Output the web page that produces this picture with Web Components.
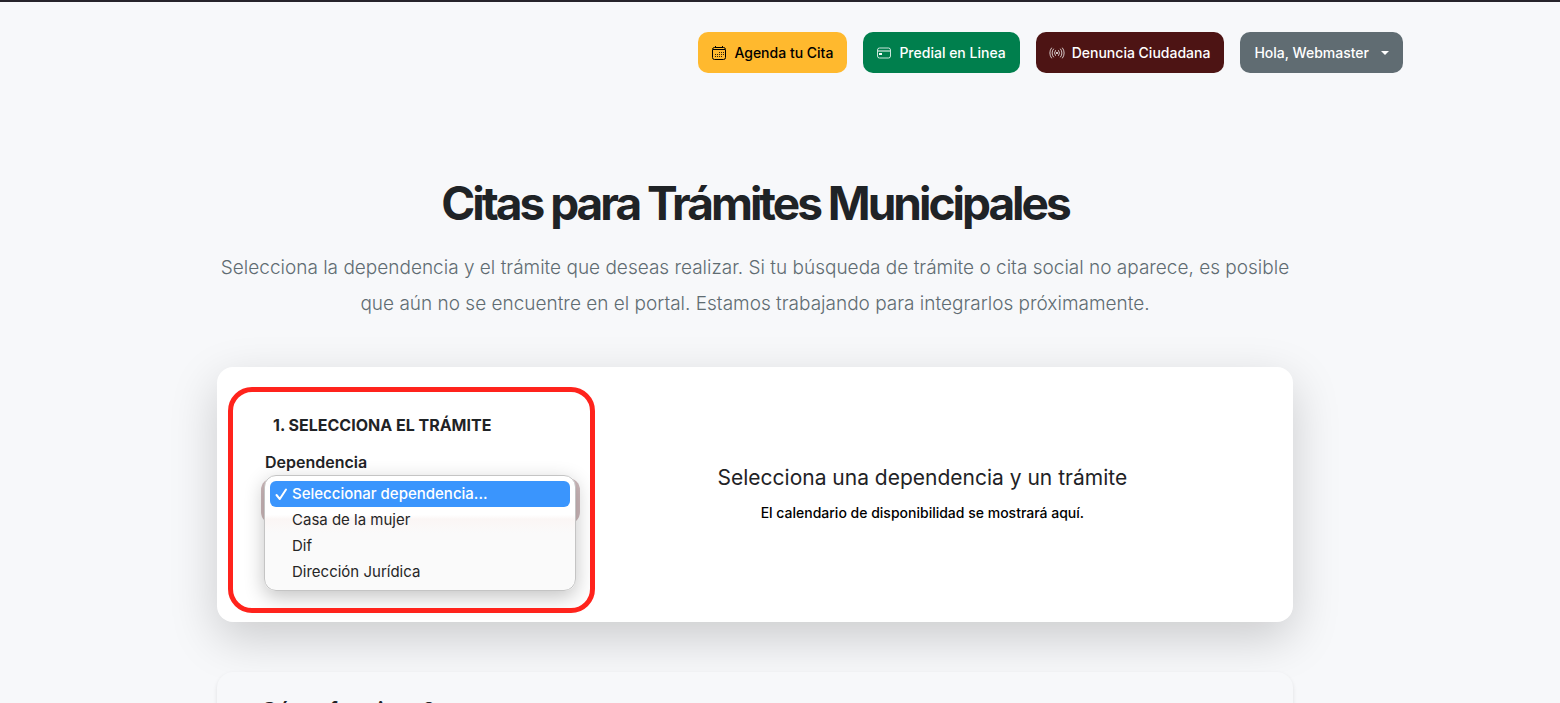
<!DOCTYPE html>
<html lang="es">
<head>
<meta charset="utf-8">
<title>Citas para Trámites Municipales</title>
<style>
html{scrollbar-width:none;background:#f7f8fa}
body{margin:0;font-family:Inter,"Liberation Sans",sans-serif;font-size:16px;line-height:24px;color:#1f2326;border-top:2px solid #26232b;padding-right:50px}
</style>
</head>
<body>
<citas-page></citas-page>
<script>
const define = (name, html) => customElements.define(name, class extends HTMLElement {
  constructor(){
    super();
    const t = document.createElement('template');
    t.innerHTML = html;
    this.attachShadow({mode:'open'}).append(t.content.cloneNode(true));
  }
});

define('nav-button', `
<style>
:host{display:block}
button{display:flex;align-items:center;gap:8px;height:41px;padding:0 14px;border:0;border-radius:10px;background:var(--bg);color:var(--fg,#fff);font:500 14px/24px Inter,sans-serif;white-space:nowrap;cursor:pointer}
::slotted(svg){width:14px;height:14px;display:block;overflow:visible}
</style>
<button type="button"><slot name="icon"></slot><span><slot></slot></span><slot name="end"></slot></button>`);

define('site-header', `
<style>
:host{display:block}
nav{max-width:1296px;margin:0 auto;padding:30px 12px 0;display:flex;justify-content:flex-end;gap:16px}
.yellow{--bg:#ffb92e;--fg:#000}
.green{--bg:#007f4d}
.wine{--bg:#4d1414}
.gray{--bg:#606c72}
.caret{display:block;width:0;margin-left:4px;border:4px solid transparent;border-top-color:#fff;border-bottom:0}
</style>
<nav aria-label="Principal">
<nav-button class="yellow"><svg slot="icon" viewBox="0 0 14 14" fill="none" stroke="currentColor"><rect x=".5" y="1.5" width="13" height="12" rx="2"/><path d="M1 3.5h12M3.5 0v2M10.5 0v2"/><path stroke-opacity=".8" d="M7 6.5h1m1 0h1m1 0h1M3 8.5h1m1 0h1m1 0h1m1 0h1m1 0h1M3 10.5h1m1 0h1m1 0h1m1 0h1"/></svg>Agenda tu Cita</nav-button>
<nav-button class="green"><svg slot="icon" viewBox="0 0 14 14" fill="none" stroke="currentColor"><rect x=".5" y="2" width="13" height="10" rx="2" stroke-opacity=".8"/><path d="M1 5h12"/><path fill="currentColor" stroke="none" d="M2 7h3v2H2z"/></svg>Predial en Linea</nav-button>
<nav-button class="wine"><svg slot="icon" viewBox="0 0 14 14" fill="none" stroke="currentColor" stroke-opacity=".75" stroke-linecap="round"><path d="M1.5 2a8 8 0 0 0 0 10M3.5 3a6 6 0 0 0 0 8M5.4 4.5a4 4 0 0 0 0 5M12.5 2a8 8 0 0 1 0 10M10.5 3a6 6 0 0 1 0 8M8.6 4.5a4 4 0 0 1 0 5"/><circle cx="7" cy="7" r="1" fill="currentColor" stroke="none"/></svg>Denuncia Ciudadana</nav-button>
<nav-button class="gray">Hola, Webmaster<i class="caret" slot="end"></i></nav-button>
</nav>`);

define('page-intro', `
<style>
:host{display:block;text-align:center;padding-top:100px}
h1{margin:0;font-size:46px;line-height:60px;font-weight:700;letter-spacing:-3px}
p{margin:17px 0 0;font-size:19px;line-height:36px;font-weight:300;color:#606c72}
</style>
<h1>Citas para Trámites Municipales</h1>
<p>Selecciona la dependencia y el trámite que deseas realizar. Si tu búsqueda de trámite o cita social no aparece, es posible que aún no se encuentre en el portal. Estamos trabajando para integrarlos próximamente.</p>`);

define('option-menu', `
<style>
:host{display:block;box-sizing:border-box;padding:5px;border:1px solid #c4c4c4;border-radius:12px;background:linear-gradient(#fff 0 34%,#fbf6f5 38%,#fafafa 50%);box-shadow:0 6px 20px rgba(0,0,0,.24)}
ul{margin:0;padding:0;list-style:none;font-size:15px}
li{display:flex;align-items:center;height:26px;padding-left:22px;border-radius:6px;color:#262626}
li[aria-selected=true]{padding-left:5px;gap:4px;background:#3a95fd;color:#fff;font-weight:500}
svg{width:13px;height:14px}
</style>
<ul role="listbox" aria-label="Dependencia">
<li role="option" aria-selected="true"><svg viewBox="0 0 13 14" fill="none" stroke="#fff" stroke-width="2" stroke-linecap="round" stroke-linejoin="round"><path d="M1.5 8 4.8 12 11 2.5"/></svg>Seleccionar dependencia...</li>
<li role="option">Casa de la mujer</li>
<li role="option">Dif</li>
<li role="option">Dirección Jurídica</li>
</ul>`);

define('dependency-field', `
<style>
:host{display:block}
label{display:block;font-weight:600;line-height:24px}
.control{position:relative;margin-top:8px}
select{display:block;box-sizing:border-box;width:100%;height:38px;padding:6px 12px;border:1px solid #4d1414;border-radius:8px;background:#fff;color:#212529;font:16px/24px Inter,sans-serif;appearance:none;box-shadow:0 0 0 4px #cdb8ba}
option-menu{position:absolute;top:-7px;left:-1px;right:0}
</style>
<label for="dep">Dependencia</label>
<div class="control">
<select id="dep"><option>Seleccionar dependencia...</option><option>Casa de la mujer</option><option>Dif</option><option>Dirección Jurídica</option></select>
<option-menu></option-menu>
</div>`);

define('booking-card', `
<style>
:host{display:grid;grid-template-columns:minmax(0,1fr) minmax(0,2fr);position:relative;margin-top:45px;min-height:255px;border-radius:16px;background:#fff;box-shadow:0 16px 48px rgba(0,0,0,.18)}
.step{padding:46px 0 0 48px}
h2{margin:0 0 13px;padding-left:8px;font-size:16px;line-height:24px;font-weight:700}
.empty{display:flex;flex-direction:column;align-items:center;justify-content:center;padding-right:24px}
h3{margin:0 0 10px;font-size:21px;line-height:26px;font-weight:400}
p{margin:0;font-size:14px;line-height:24px;font-weight:500;color:#000}
.mark{position:absolute;top:20px;left:11px;bottom:9px;width:367px;box-sizing:border-box;border:5px solid #ff231c;border-radius:24px;pointer-events:none}
</style>
<section class="step"><h2>1. SELECCIONA EL TRÁMITE</h2><dependency-field></dependency-field></section>
<section class="empty"><h3>Selecciona una dependencia y un trámite</h3><p>El calendario de disponibilidad se mostrará aquí.</p></section>
<div class="mark"></div>`);

define('info-card', `
<style>
:host{display:block;position:relative;margin-top:50px;padding:22px 44px;border-radius:16px;background:#f7f8fa;box-shadow:0 2px 4px rgba(0,0,0,.1)}
h2{margin:0;font-size:22px;line-height:32px;font-weight:600}
</style>
<h2><slot></slot></h2>`);

define('citas-page', `
<style>
:host{display:block}
main{max-width:1076px;margin:0 auto;padding:0 12px}
</style>
<site-header></site-header>
<main><page-intro></page-intro><booking-card></booking-card><info-card>Cómo funciona?</info-card></main>`);
</script>
</body>
</html>
